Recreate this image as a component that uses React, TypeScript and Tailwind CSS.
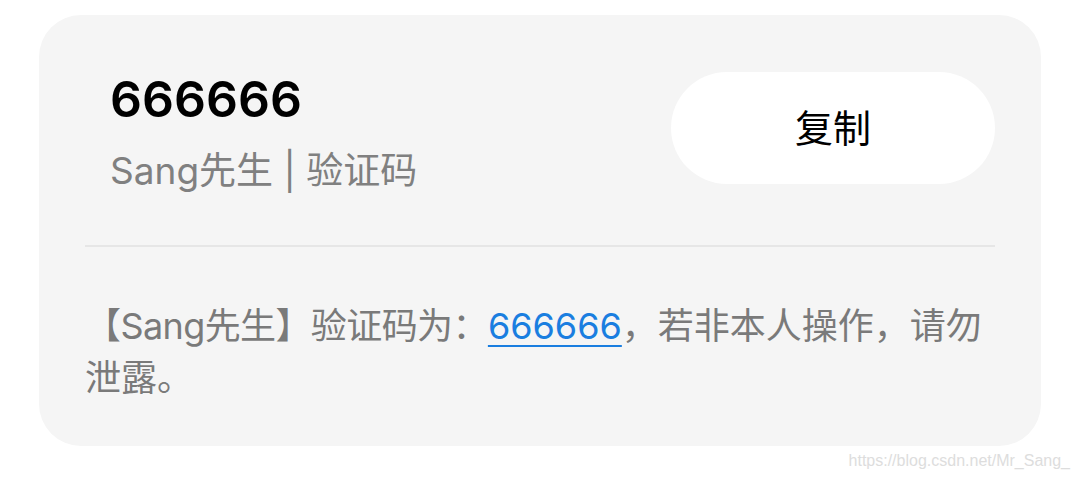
import React from 'react';

export default function App() {
  const sans = "font-['Inter','Noto_Sans_CJK_SC',sans-serif]";

  return (
    <div className={`w-[1080px] h-[479px] bg-white overflow-hidden ${sans}`}>
      <div className="pt-[15px] px-[39px]">
        {/* SMS card */}
        <div className="h-[431px] rounded-[42px] bg-[#f5f5f5] px-[46px]">
          <div className="flex items-start justify-between pt-[54px]">
            <div className="pl-[25px]">
              <div className="text-[50px] leading-[60px] font-semibold text-black">666666</div>
              <div className="mt-[20px] text-[37px] leading-[44px] text-[#808080]">
                Sang先生 | 验证码
              </div>
            </div>
            <button className="mt-[3px] w-[324px] h-[112px] rounded-full bg-white text-[38px] text-black flex items-center justify-center">
              复制
            </button>
          </div>

          <div className="mt-[52px] h-[2px] bg-[#e6e6e6]" />

          <p className="mt-[53px] text-[36px] leading-[52px] text-[#7a7a7a]">
            <span className="tracking-[-0.6px]">【Sang先生】验证码为：</span>
            <span className="text-[#1a7ee0] underline decoration-[2px] underline-offset-[6px]">666666</span>
            ，若非本人操作，请勿泄露。
          </p>
        </div>
      </div>

      {/* watermark */}
      <div className="mt-[6px] pr-[10px] text-right text-[16px] leading-[18px] text-[#dddddd] font-['Liberation_Sans',Arial,sans-serif]">
        https://blog.csdn.net/Mr_Sang_
      </div>
    </div>
  );
}
